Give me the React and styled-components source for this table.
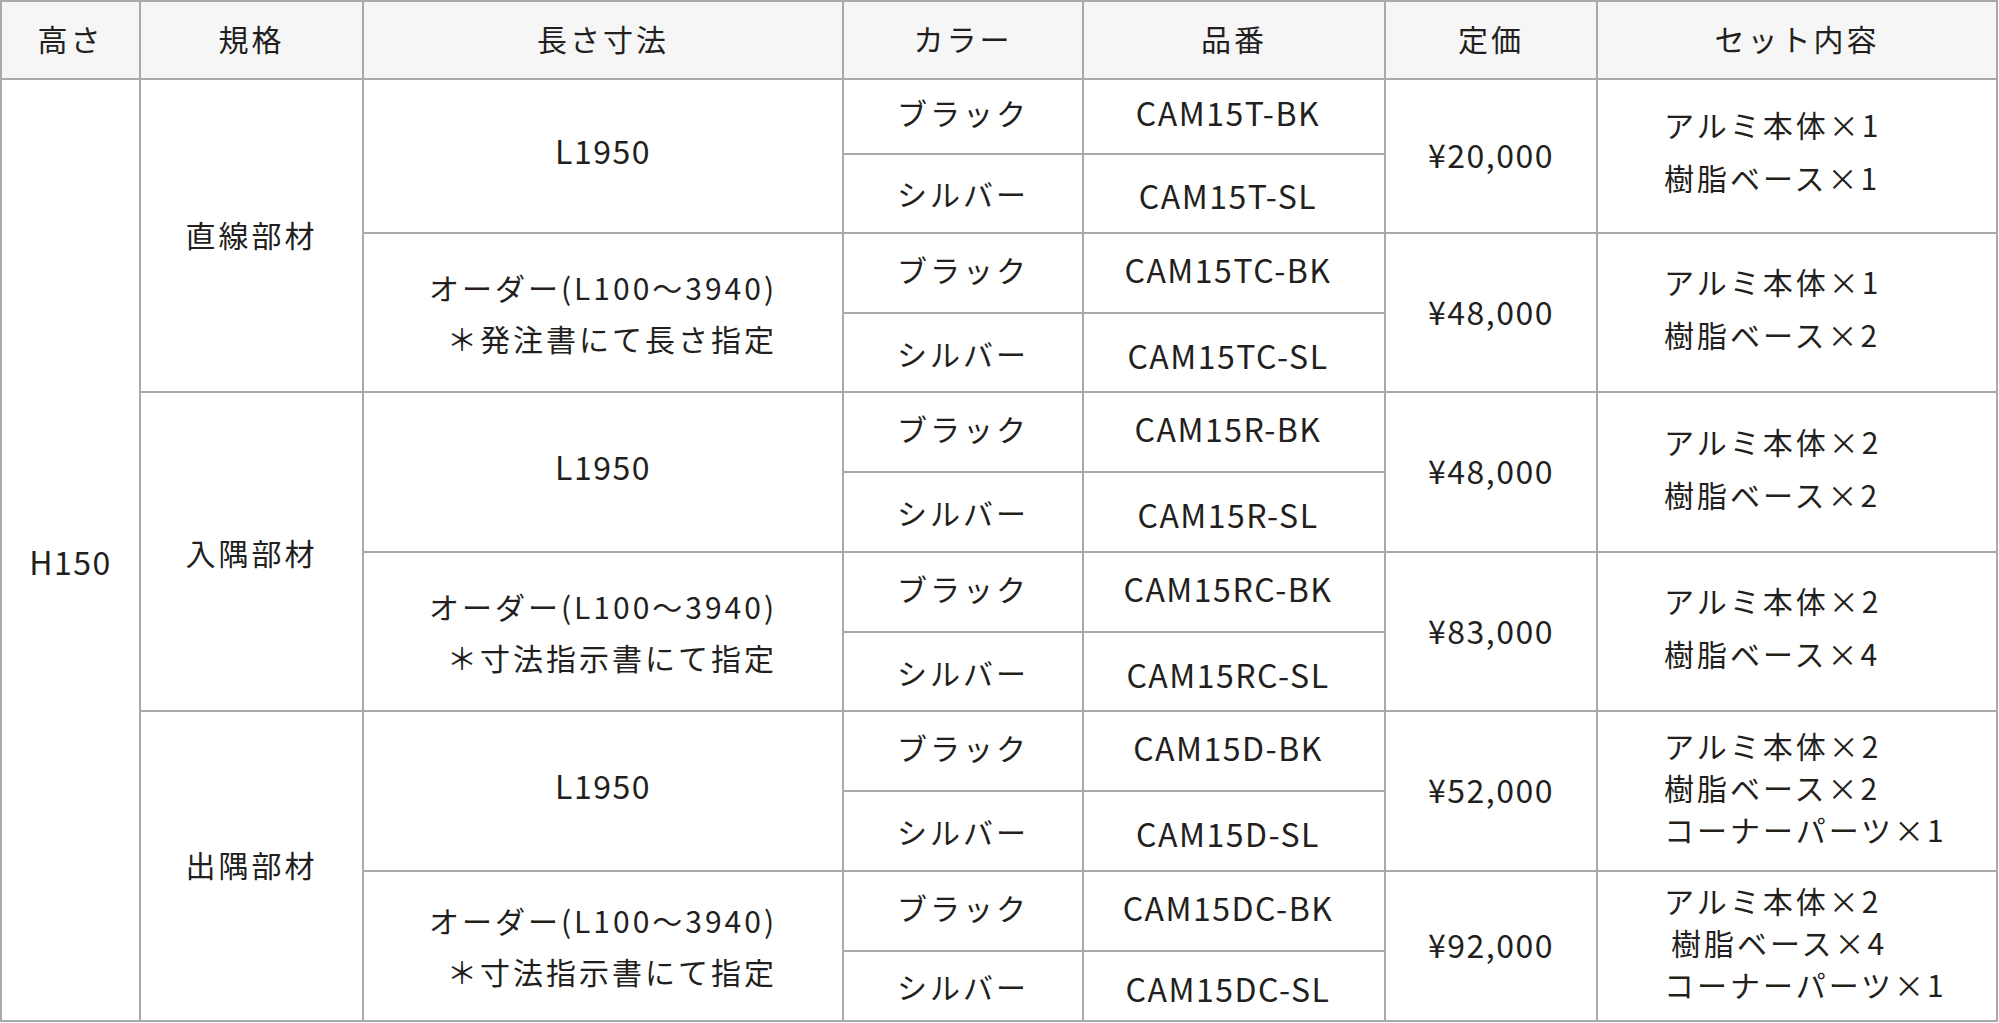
import React from "react";
import styled, { createGlobalStyle } from "styled-components";

const Global = createGlobalStyle`
  html, body { margin: 0; padding: 0; background: #ffffff; }
  body { font-family: "Noto Sans CJK JP", "Noto Sans", sans-serif; color: #231f20; }
`;

const Table = styled.div`
  display: grid;
  width: 1998px;
  box-sizing: border-box;
  padding: 2px;
  gap: 2px;
  background: #a9a9a9;
  grid-template-columns: 137px 221px 478px 238px 300px 210px 398px;
  grid-template-rows: 75.7px 73px 77.3px 77.7px 77.8px 77.5px 78px 77.7px 77.8px 77.5px 78px 78px 68px;
  font-size: 30px;
  letter-spacing: 3px;
`;

const Head = styled.div`
  background: #f6f6f6;
  display: flex;
  align-items: center;
  justify-content: center;
  line-height: 1;
  padding-bottom: 4px;
  box-sizing: border-box;
`;

const Cell = styled.div`
  background: #ffffff;
  display: flex;
  align-items: center;
  justify-content: ${(p) => (p.$left ? "flex-start" : "center")};
  grid-row: span ${(p) => p.$span || 1};
  padding: ${(p) => p.$pad || "0"};
  box-sizing: border-box;
  line-height: 1;
  white-space: nowrap;
  font-size: ${(p) => (p.$latin ? "32px" : "30px")};
  letter-spacing: ${(p) => (p.$latin ? "1.5px" : "3px")};
`;

const Stack = styled.div`
  display: flex;
  flex-direction: column;
  align-items: ${(p) => p.$align || "flex-start"};
  gap: ${(p) => p.$gap}px;
`;

const Line = styled.span`
  display: block;
  margin-left: ${(p) => p.$indent || 0}px;
`;

const headers = ["高さ", "規格", "長さ寸法", "カラー", "品番", "定価", "セット内容"];

const groups = [
  {
    name: "直線部材",
    items: [
      { len: ["L1950"], code: "CAM15T", price: "¥20,000", set: ["アルミ本体×1", "樹脂ベース×1"] },
      { len: ["オーダー(L100～3940)", "＊発注書にて長さ指定"], code: "CAM15TC", price: "¥48,000", set: ["アルミ本体×1", "樹脂ベース×2"] },
    ],
  },
  {
    name: "入隅部材",
    items: [
      { len: ["L1950"], code: "CAM15R", price: "¥48,000", set: ["アルミ本体×2", "樹脂ベース×2"] },
      { len: ["オーダー(L100～3940)", "＊寸法指示書にて指定"], code: "CAM15RC", price: "¥83,000", set: ["アルミ本体×2", "樹脂ベース×4"] },
    ],
  },
  {
    name: "出隅部材",
    items: [
      { len: ["L1950"], code: "CAM15D", price: "¥52,000", set: ["アルミ本体×2", "樹脂ベース×2", "コーナーパーツ×1"] },
      { len: ["オーダー(L100～3940)", "＊寸法指示書にて指定"], code: "CAM15DC", price: "¥92,000", set: ["アルミ本体×2", "樹脂ベース×4", "コーナーパーツ×1"], indent: 7 },
    ],
  },
];

export default function App() {
  const cells = [];
  groups.forEach((g, gi) => {
    g.items.forEach((it, ii) => {
      const k = `${gi}-${ii}`;
      const single = it.len.length === 1;
      const three = it.set.length === 3;
      if (gi === 0 && ii === 0) {
        cells.push(
          <Cell key="h150" $span={12} $latin $pad="22px 0 0 0">H150</Cell>
        );
      }
      if (ii === 0) {
        cells.push(
          <Cell key={`g${gi}`} $span={4} $pad={gi === 1 ? "0" : "0 0 4px 0"}>{g.name}</Cell>
        );
      }
      cells.push(
        <Cell key={`len${k}`} $span={2} $latin={single} $pad={single ? "0 0 12px 0" : "0"}>
          {single ? (
            it.len[0]
          ) : (
            <Stack $gap={21} $align="flex-end">
              {it.len.map((l) => (
                <Line key={l}>{l}</Line>
              ))}
            </Stack>
          )}
        </Cell>
      );
      cells.push(<Cell key={`bk${k}`} $pad="0 0 8px 0">ブラック</Cell>);
      cells.push(<Cell key={`cbk${k}`} $latin $pad="0 12px 8px 0">{it.code}-BK</Cell>);
      cells.push(
        <Cell key={`p${k}`} $span={2} $latin $pad="0 0 4px 0">{it.price}</Cell>
      );
      cells.push(
        <Cell key={`s${k}`} $span={2} $left $pad={three ? "0 0 8px 66px" : "0 0 10px 66px"}>
          <Stack $gap={three ? 12 : 23}>
            {it.set.map((s, si) => (
              <Line key={s} $indent={si === 1 ? it.indent : 0}>{s}</Line>
            ))}
          </Stack>
        </Cell>
      );
      cells.push(<Cell key={`sl${k}`}>シルバー</Cell>);
      cells.push(<Cell key={`csl${k}`} $latin $pad="4px 12px 0 0">{it.code}-SL</Cell>);
    });
  });

  return (
    <>
      <Global />
      <Table>
        {headers.map((h) => (
          <Head key={h}>{h}</Head>
        ))}
        {cells}
      </Table>
    </>
  );
}
